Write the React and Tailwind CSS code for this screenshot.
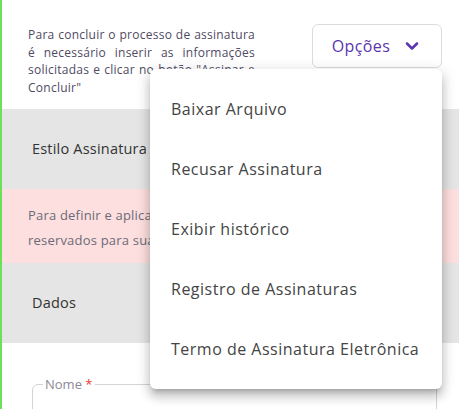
import { ChevronDown } from 'lucide-react';

const menuItems = [
  'Baixar Arquivo',
  'Recusar Assinatura',
  'Exibir histórico',
  'Registro de Assinaturas',
  'Termo de Assinatura Eletrônica',
];

export default function App() {
  return (
    <div
      className="relative h-[409px] overflow-hidden bg-white border-l-2 border-[#6be15a]"
      style={{ fontFamily: '"Open Sans", "Noto Sans", sans-serif' }}
    >
      {/* Topo com instruções */}
      <div className="flex items-start h-[109px] pl-[26px] pr-[16px] pt-[24px]">
        <p className="w-[227px] mt-[2px] text-[12px] leading-[17.7px] tracking-[0.25px] text-[#4f4a63] text-justify">
          Para concluir o processo de assinatura é necessário inserir as informações
          solicitadas e clicar no botão "Assinar e Concluir"
        </p>
        <button className="ml-auto mr-[1px] flex items-center gap-[12px] h-[44px] w-[130px] justify-center border border-[#dcdcdc] rounded-md text-[16px] tracking-[0.4px] text-[#5b34b0]">
          Opções
          <ChevronDown size={20} strokeWidth={3} />
        </button>
      </div>

      <div className="flex items-center h-[80px] bg-[#e5e5e5] pl-[30px] text-[14.5px] tracking-[0.2px] text-[#333]">
        Estilo Assinatura
      </div>

      <div className="h-[74px] bg-[#fddfdf] pl-[26px] pt-[14px] text-[13px] leading-[25px] tracking-[0.2px] text-[#6b6b78]">
        <p className="w-[400px]">
          Para definir e aplicar o estilo de assinatura utilize os campos
          reservados para sua assinatura
        </p>
      </div>

      <div className="flex items-center h-[80px] bg-[#e5e5e5] pl-[30px] text-[14.5px] tracking-[0.2px] text-[#333]">
        Dados
      </div>

      <div className="pt-[32px] pl-[30px] pr-[22px]">
        <fieldset className="h-[60px] border border-[#d4d4d4] rounded-[6px] px-[10px]">
          <legend className="px-[2px] text-[13px] text-[#8a8a96]">
            Nome <span className="text-[#e53935]">*</span>
          </legend>
        </fieldset>
      </div>

      {/* Menu suspenso */}
      <div className="absolute left-[148px] top-[69px] w-[292px] rounded-[6px] bg-white py-[10px] shadow-[0_5px_5px_-3px_rgba(0,0,0,0.2),0_8px_10px_1px_rgba(0,0,0,0.14),0_3px_14px_2px_rgba(0,0,0,0.12)]">
        {menuItems.map((item) => (
          <div key={item} className="flex items-center h-[60px] pl-[21px] text-[16px] tracking-[0.5px] text-[#444]">
            {item}
          </div>
        ))}
      </div>
    </div>
  );
}
